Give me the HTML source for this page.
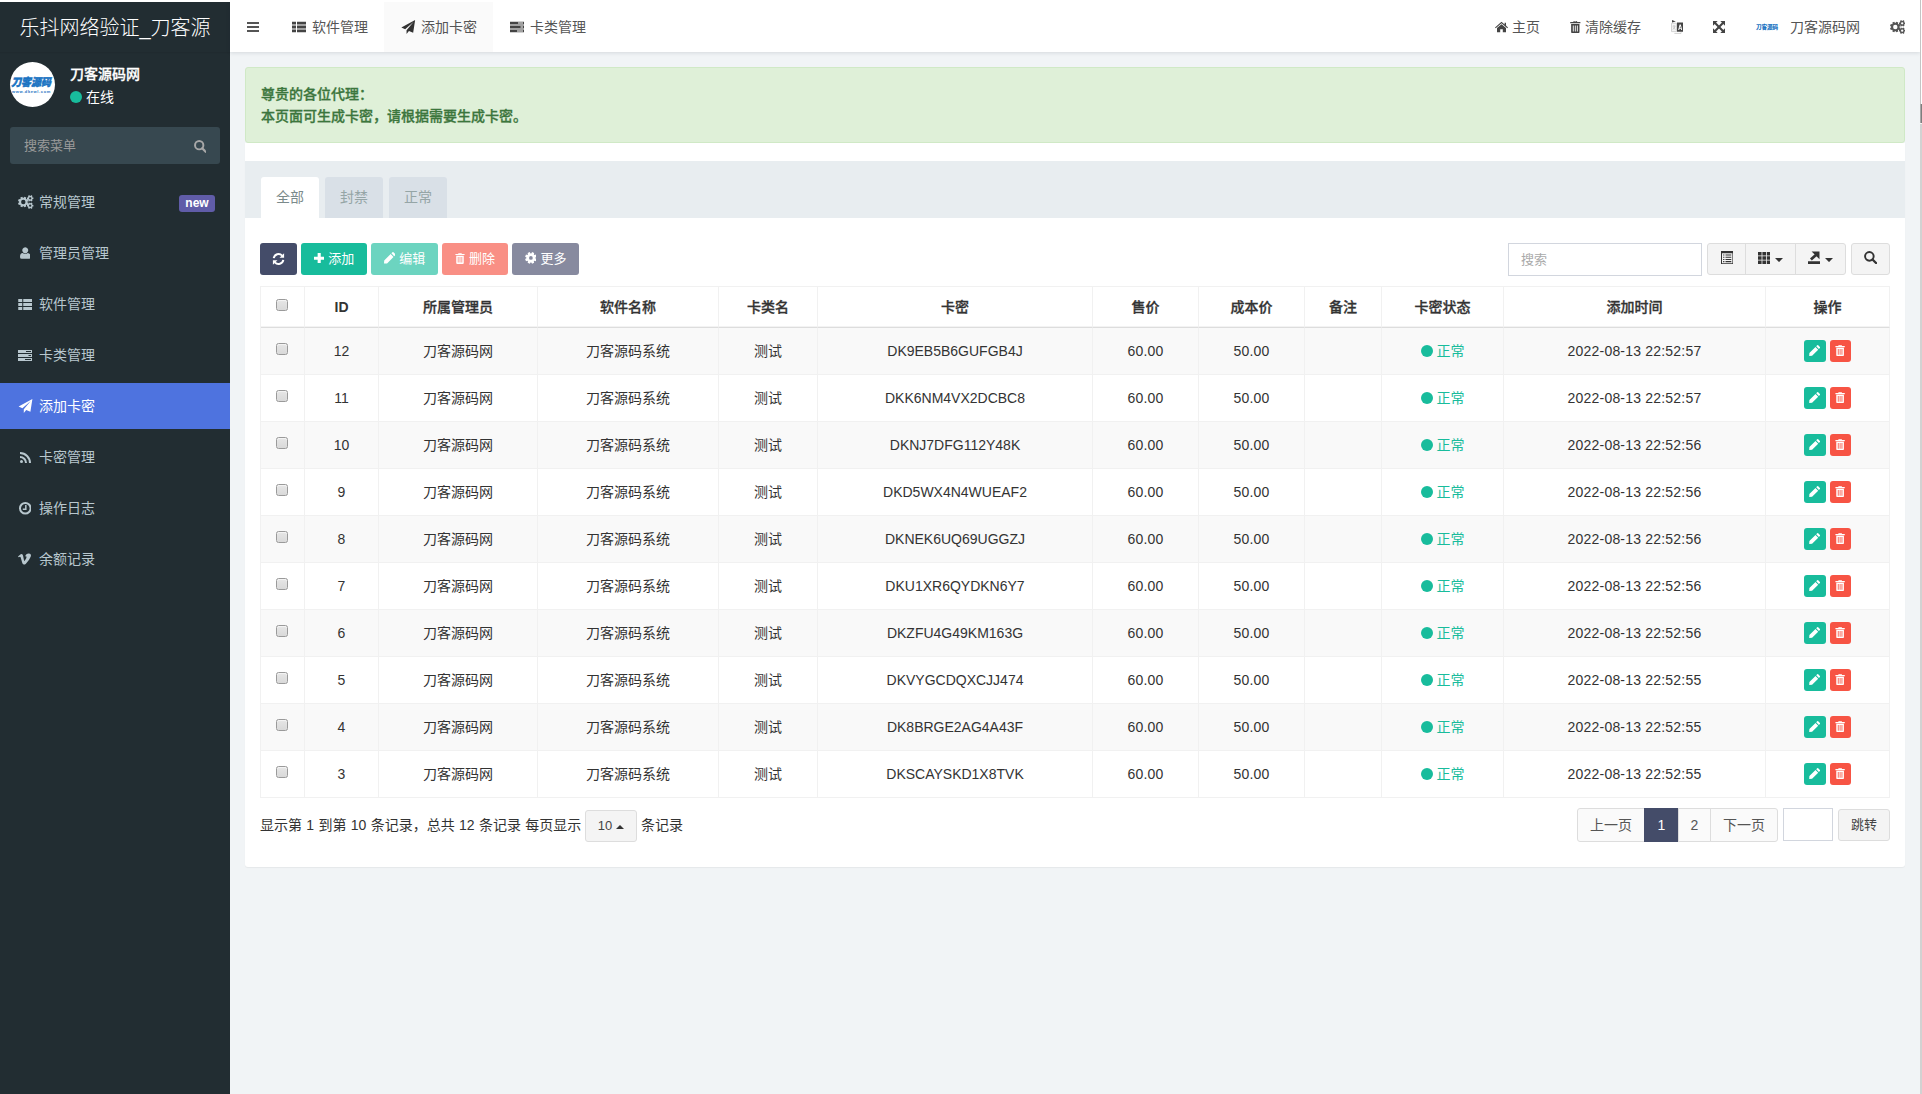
<!DOCTYPE html><html lang="zh-CN"><head><meta charset="utf-8"><title>乐抖网络验证_刀客源码网</title><style>
*{box-sizing:border-box;margin:0;padding:0}
html,body{width:1922px;height:1094px;overflow:hidden;background:#fff}
body{font-family:"Liberation Sans","Noto Sans CJK SC",sans-serif;font-size:14px;color:#444;position:relative;line-height:1.42857}
.ic{display:inline-block;vertical-align:middle}
#app{position:absolute;left:0;top:2px;width:1920px;height:1092px;background:#f1f4f6;overflow:hidden}
#edge{position:absolute;left:1920px;top:0;width:2px;height:1094px;background:#d2d2d2}
#edge i{position:absolute;left:0;width:2px;display:block}
#side{position:absolute;left:0;top:0;width:230px;height:1092px;background:#222d32}
#logo{position:absolute;left:0;top:0;width:230px;height:50px;line-height:52px;text-align:center;color:#fff;font-size:20px;font-weight:300;white-space:nowrap;overflow:hidden;box-shadow:0 1px 1px rgba(0,0,0,.05)}
#avatar{position:absolute;left:10px;top:60px;width:45px;height:45px;border-radius:50%;background:#fff;overflow:hidden;text-align:center}
#avatar b{display:block;color:#1a73c2;font-size:10px;line-height:10px;margin-top:16px;font-weight:900;-webkit-text-stroke:.45px #1a73c2;font-style:italic;letter-spacing:-.1px;white-space:nowrap;margin-left:-3px;transform:scaleY(1.08)}
#avatar s{display:block;text-decoration:none;color:#1a73c2;font-size:4px;line-height:4px;margin-top:2px;letter-spacing:.62px;font-weight:bold;white-space:nowrap;margin-left:-2px}
#uname{position:absolute;left:70px;top:62px;color:#fff;font-weight:500;-webkit-text-stroke:.3px #fff;font-size:14px;line-height:20px}
#ustat{position:absolute;left:70px;top:85px;color:#fff;font-size:14px;line-height:20px}
#ustat i{display:inline-block;width:12px;height:12px;border-radius:50%;background:#18bc9c;vertical-align:-1px;margin-right:4px}
#msearch{position:absolute;left:10px;top:125px;width:210px;height:37px;border-radius:3px;background:#374850;color:#9a9a9a;font-size:13px;line-height:37px;padding-left:14px}
#msearch .ic{position:absolute;right:14px;top:13px}
.mi{position:absolute;left:0;width:230px;height:46px;line-height:46px;color:#b8c7ce;font-size:14px}
.mi u{position:absolute;left:10px;top:0;width:30px;height:46px;text-align:center;text-decoration:none;line-height:46px}
.mi u .ic{vertical-align:middle;position:relative;top:-1px}
.mi.first u .ic{left:1px}
.mi span{position:absolute;left:39px;top:0}
.mi.act{background:#4e73df;color:#fff}
.mi em{position:absolute;left:179px;top:16px;width:36px;height:17px;border-radius:3px;background:#605ca8;color:#fff;font-style:normal;font-weight:bold;font-size:12px;line-height:16px;text-align:center}
#nav{position:absolute;left:230px;top:0;width:1690px;height:50px;background:#fff;box-shadow:0 1px 4px rgba(0,21,41,.12);color:#555;font-size:14px;line-height:50px}
#nav .t{position:absolute;top:0;height:50px;white-space:nowrap}
#nav .t .ic{position:absolute;top:50%;transform:translateY(-50%)}
#nav .t span{position:absolute;top:0}
#alert{position:absolute;left:245px;top:65px;width:1660px;height:76px;background:#dff0d8;border:1px solid #d0e9c6;border-radius:3px;color:#3c763d;font-weight:500;-webkit-text-stroke:.3px #3c763d;font-size:14px;line-height:22.5px;padding:14.5px 15px}
#panel{position:absolute;left:245px;top:141px;width:1660px;height:724px;background:#fff;border-radius:0 0 3px 3px;box-shadow:0 1px 1px rgba(0,0,0,.05)}
#phead{position:absolute;left:0;top:18px;width:1660px;height:57px;background:#e8edf0}
.tab{position:absolute;top:16px;height:41px;width:58px;border-radius:3px 3px 0 0;background:#d9e0e7;color:#95a5a6;text-align:center;line-height:40px;font-size:14px}
.tab.on{background:#fff;color:#7b8a8b}
.btn{position:absolute;top:100px;height:32px;border-radius:3px;color:#fff;font-size:13px;line-height:30px;text-align:center;white-space:nowrap;border:1px solid transparent}
.btn .ic{margin-right:4px;vertical-align:-1px}
.gbtn{position:absolute;top:100px;height:32px;background:#f4f4f4;border:1px solid #ddd;color:#444;text-align:center}
.gbtn .ic{position:absolute}
#sinput{position:absolute;left:1263px;top:100px;width:194px;height:33px;border:1px solid #d2d6de;background:#fff;color:#aaa;font-size:13px;line-height:31px;padding-left:12px}
table{position:absolute;left:15px;top:143px;width:1630px;border-collapse:separate;border-spacing:0;table-layout:fixed;font-size:14px;color:#333;border-top:1px solid #f1f1f1;border-left:1px solid #f1f1f1}
td,th{border-right:1px solid #f1f1f1;border-bottom:1px solid #f1f1f1;text-align:center;vertical-align:middle;padding:0;white-space:nowrap;overflow:hidden}
th{height:41px;font-weight:500;-webkit-text-stroke:.3px #333;border-bottom:1px solid #ddd;color:#333;box-shadow:inset 0 -1px 0 rgba(221,221,221,.35)}
td{height:47px;padding-top:1px}
td.n{letter-spacing:.2px}
th{padding-top:1px}
tr.odd td{background:#f9f9f9}
.cb{display:inline-block;width:12px;height:12px;border:1px solid #9a9a9a;border-radius:2.5px;background:linear-gradient(#e6e6e6,#d9d9d9);vertical-align:middle;position:relative;top:-2.5px;left:-.6px;box-shadow:inset 0 1px 1px rgba(255,255,255,.6)}
.ok{color:#18bc9c}
.ok i{display:inline-block;width:12px;height:12px;border-radius:50%;background:#18bc9c;vertical-align:-1px;margin-right:4px}
.ob{display:inline-block;width:22px;height:22px;border-radius:3px;vertical-align:middle;line-height:20px;text-align:center;position:relative;top:-1px}
.ob .ic{vertical-align:middle;position:relative;top:-.3px}
.ob.e{background:#18bc9c;margin-right:4px}
.ob.d{background:#f75444;width:21px;margin-right:1px}
#pinfo{position:absolute;left:15px;top:665px;height:34px;line-height:34px;color:#333;font-size:14px;white-space:nowrap;word-spacing:.45px}
#pinfo2{position:absolute;left:396px;top:665px;height:34px;line-height:34px;color:#333;font-size:14px;white-space:nowrap}
#psize{position:absolute;left:340px;top:667px;width:52px;height:32px;border:1px solid #ddd;border-radius:3px;background:#f4f4f4;text-align:center;font-size:13px;line-height:30px;color:#444}
#psize .ic{margin-left:4px;vertical-align:1px}
.pg{position:absolute;top:665px;height:34px;border:1px solid #ddd;background:#fafafa;color:#555;text-align:center;line-height:32px;font-size:14px}
.pg.on{background:#444c69;border-color:#444c69;color:#fff}
</style></head><body>
<div id="edge"><i style="top:0;height:104px;background:linear-gradient(90deg,#c4c4c4 50%,#fff 50%)"></i><i style="top:104px;height:19px;background:linear-gradient(90deg,#a8a8a8 50%,#7e7e7e 50%)"></i><i style="top:123px;height:1px;background:#f4f4f4"></i></div>
<div id="app">
<div id="side"><div id="logo">乐抖网络验证_刀客源</div>
<div id="avatar"><b>刀客源码</b><s>www.dkewl.com</s></div><div id="uname">刀客源码网</div><div id="ustat"><i></i>在线</div>
<div id="msearch">搜索菜单<svg class="ic" width="12.5" height="12.5" viewBox="0 0 12 12" ><circle cx="5" cy="5" r="4" fill="none" stroke="#a8a8a8" stroke-width="1.9"/><path d="M7.9 7.9 L11.2 11.2" stroke="#a8a8a8" stroke-width="2.2" stroke-linecap="round"/></svg></div>
<div class="mi first" style="top:177px"><u><svg class="ic" width="15.4" height="14" viewBox="0 0 15.4 14" ><path fill="#b8c7ce" fill-rule="evenodd" d="M9.48 7.41 L10.59 8.10 L9.81 9.96 L8.55 9.66 L7.96 10.25 L8.26 11.51 L6.40 12.29 L5.71 11.18 L4.89 11.18 L4.20 12.29 L2.34 11.51 L2.64 10.25 L2.05 9.66 L0.79 9.96 L0.01 8.10 L1.12 7.41 L1.12 6.59 L0.01 5.90 L0.79 4.04 L2.05 4.34 L2.64 3.75 L2.34 2.49 L4.20 1.71 L4.89 2.82 L5.71 2.82 L6.40 1.71 L8.26 2.49 L7.96 3.75 L8.55 4.34 L9.81 4.04 L10.59 5.90 L9.48 6.59Z M7.50 7.00 A2.20 2.20 0 1 0 3.10 7.00 A2.20 2.20 0 1 0 7.50 7.00 Z M14.42 2.38 L15.40 2.48 L15.40 4.12 L14.42 4.22 L14.10 4.76 L14.51 5.66 L13.09 6.48 L12.51 5.68 L11.89 5.68 L11.31 6.48 L9.89 5.66 L10.30 4.76 L9.98 4.22 L9.00 4.12 L9.00 2.48 L9.98 2.38 L10.30 1.84 L9.89 0.94 L11.31 0.12 L11.89 0.92 L12.51 0.92 L13.09 0.12 L14.51 0.94 L14.10 1.84Z M13.35 3.30 A1.15 1.15 0 1 0 11.05 3.30 A1.15 1.15 0 1 0 13.35 3.30 Z M14.42 9.78 L15.40 9.88 L15.40 11.52 L14.42 11.62 L14.10 12.16 L14.51 13.06 L13.09 13.88 L12.51 13.08 L11.89 13.08 L11.31 13.88 L9.89 13.06 L10.30 12.16 L9.98 11.62 L9.00 11.52 L9.00 9.88 L9.98 9.78 L10.30 9.24 L9.89 8.34 L11.31 7.52 L11.89 8.32 L12.51 8.32 L13.09 7.52 L14.51 8.34 L14.10 9.24Z M13.35 10.70 A1.15 1.15 0 1 0 11.05 10.70 A1.15 1.15 0 1 0 13.35 10.70 Z"/></svg></u><span>常规管理</span><em>new</em></div>
<div class="mi" style="top:228px"><u><svg class="ic" width="10.5" height="12" viewBox="0 0 10 11" ><path fill="#b8c7ce" d="M5 0 A2.8 2.9 0 1 1 4.99 0 Z M2.6 5.4 Q5 7.2 7.4 5.4 Q10 5.6 10 9.2 Q10 11 8.4 11 H1.6 Q0 11 0 9.2 Q0 5.6 2.6 5.4 Z"/></svg></u><span>管理员管理</span></div>
<div class="mi" style="top:279px"><u><svg class="ic" width="14.5" height="11" viewBox="0 0 14 11" ><path fill="#b8c7ce" d="M0 0h4v3H0zM5 0h9v3H5zM0 4h4v3H0zM5 4h9v3H5zM0 8h4v3H0zM5 8h9v3H5z"/></svg></u><span>软件管理</span></div>
<div class="mi" style="top:330px"><u><svg class="ic" width="14" height="11" viewBox="0 0 14 11" ><path fill="#b8c7ce" fill-rule="evenodd" d="M0 0h14v3.1H0zM8 1.1h5v.9H8zM0 4h14v3.1H0zM10.5 5.1h2.5v.9h-2.5zM0 8h14v3H0zM7 9.1h6v.9H7z"/></svg></u><span>卡类管理</span></div>
<div class="mi act" style="top:381px"><u><svg class="ic" width="15" height="14" viewBox="0 0 14 14" ><path fill="#fff" d="M13.9 0 L11.9 12.7 L7.7 10.9 L5.3 14 L5.3 10.2 L12.2 2 L3.9 9.2 L0.1 7.6 Z"/></svg></u><span>添加卡密</span></div>
<div class="mi" style="top:432px"><u><svg class="ic" width="11" height="11" viewBox="0 0 11 11" ><g fill="none" stroke="#b8c7ce" stroke-width="2"><path d="M0 5 A6 6 0 0 1 6 11"/><path d="M0 1 A10 10 0 0 1 10 11"/></g><circle cx="1.5" cy="9.5" r="1.5" fill="#b8c7ce"/></svg></u><span>卡密管理</span></div>
<div class="mi" style="top:483px"><u><svg class="ic" width="12.6" height="12.6" viewBox="0 0 12 12" ><circle cx="6" cy="6" r="5.05" fill="none" stroke="#b8c7ce" stroke-width="1.9"/><path d="M6.5 2.9 V6.9 H3.6" fill="none" stroke="#b8c7ce" stroke-width="1.4"/></svg></u><span>操作日志</span></div>
<div class="mi" style="top:534px"><u><svg class="ic" width="13.5" height="12" viewBox="0 0 13 11" ><path fill="#b8c7ce" d="M0 3.2 L2.6 1 Q4.4 0 4.9 2.4 L5.8 7 Q6 7.8 6.6 7 Q8.4 4.6 8.2 3.4 Q8 2.6 6.8 3.1 Q7.8 -0.1 10.6 0.1 Q13.2 0.4 12.2 3.4 Q11 6.6 7.6 10 Q5.4 12 4.2 9.6 L2.6 4 Q2.2 2.8 0.6 3.9 Z"/></svg></u><span>余额记录</span></div>
</div>
<div id="nav">
<div class="t" style="left:17px"><svg class="ic" width="12" height="10" viewBox="0 0 12 10" ><path fill="#555" d="M0 0h12v2H0zM0 4h12v2H0zM0 8h12v2H0z"/></svg></div>
<div class="t" style="left:154px;width:109px;background:#fafafa"></div>
<div class="t" style="left:62px"><svg class="ic" width="14" height="11" viewBox="0 0 14 11" ><path fill="#444" d="M0 0h4v3H0zM5 0h9v3H5zM0 4h4v3H0zM5 4h9v3H5zM0 8h4v3H0zM5 8h9v3H5z"/></svg><span style="left:20px">软件管理</span></div>
<div class="t" style="left:171px"><svg class="ic" width="14.5" height="14" viewBox="0 0 14 14" ><path fill="#333" d="M13.9 0 L11.9 12.7 L7.7 10.9 L5.3 14 L5.3 10.2 L12.2 2 L3.9 9.2 L0.1 7.6 Z"/></svg><span style="left:20px">添加卡密</span></div>
<div class="t" style="left:280px"><svg class="ic" width="14" height="11" viewBox="0 0 14 11" ><path fill="#444" fill-rule="evenodd" d="M0 0h14v3.1H0zM8 1.1h5v.9H8zM0 4h14v3.1H0zM10.5 5.1h2.5v.9h-2.5zM0 8h14v3H0zM7 9.1h6v.9H7z"/></svg><span style="left:20px">卡类管理</span></div>
<div class="t" style="left:1265px"><svg class="ic" width="13" height="11" viewBox="0 0 13 11" ><path fill="#444" d="M6.5 0.2 L9.6 2.9 V1.2 H11 V4.1 L13 5.9 L12.3 6.7 L6.5 1.8 L0.7 6.7 L0 5.9 Z M6.5 2.8 L11 6.6 V11 H7.8 V7.8 H5.2 V11 H2 V6.6 Z"/></svg><span style="left:17px">主页</span></div>
<div class="t" style="left:1340px"><svg class="ic" width="10.6" height="12.2" viewBox="0 0 10 12" ><path fill="#444" fill-rule="evenodd" d="M3 1 L3.6 0 H6.4 L7 1 H10 V2.3 H0 V1 Z M3.9 1 H6.1 L5.9 0.7 H4.1 Z M0.9 3 H9.1 V10.8 Q9.1 12 7.9 12 H2.1 Q0.9 12 0.9 10.8 Z M2.55 4.4 V10.4 H3.45 V4.4 Z M4.55 4.4 V10.4 H5.45 V4.4 Z M6.55 4.4 V10.4 H7.45 V4.4 Z"/></svg><span style="left:15px">清除缓存</span></div>
<div class="t" style="left:1441px"><svg class="ic" width="12" height="14" viewBox="0 0 12 14" ><path d="M0.5 3.2H5.6V11.6H0.5Z" fill="#f4f4f4" stroke="#c9c9c9" stroke-width=".8"/><path d="M1.6 6.2H4.4M3 5.2V6.2M1.7 9.4Q3.6 8.4 4 6.4M2.2 7.4L4.3 9.6" stroke="#bbb" stroke-width=".7" fill="none"/><path fill="#444" d="M1 0L4.8 1.4L1 2.6Z"/><path fill="#444" fill-rule="evenodd" d="M6 2.6H12V11.8H6Z M8.6 4.6L7.2 10H8.2L8.5 8.8H9.9L10.2 10H11.2L9.8 4.6Z M9.2 5.9L9.7 7.9H8.7Z"/><path d="M3.4 13.4H10L10.2 12.4" stroke="#c4c4c4" stroke-width=".8" fill="none"/></svg></div>
<div class="t" style="left:1483px"><svg class="ic" width="12" height="12" viewBox="0 0 12 12" ><path fill="#444" d="M0 0H4.7L0 4.7ZM12 0V4.7L7.3 0ZM12 12H7.3L12 7.3ZM0 12V7.3L4.7 12Z"/><path d="M1.6 1.6L10.4 10.4M10.4 1.6L1.6 10.4" stroke="#444" stroke-width="2.1"/></svg></div>
<div class="t" style="left:1525px"><i style="position:absolute;left:0;top:13px;width:25px;height:25px;border-radius:50%;background:#fff;overflow:hidden;text-align:center;font-style:normal;font-size:5.6px;line-height:24px;color:#1a73c2;font-weight:900;white-space:nowrap;letter-spacing:-.1px;text-indent:-1px">刀客源码</i><span style="left:35px">刀客源码网</span></div>
<div class="t" style="left:1660px"><svg class="ic" width="15.4" height="14" viewBox="0 0 15.4 14" ><path fill="#555" fill-rule="evenodd" d="M9.48 7.41 L10.59 8.10 L9.81 9.96 L8.55 9.66 L7.96 10.25 L8.26 11.51 L6.40 12.29 L5.71 11.18 L4.89 11.18 L4.20 12.29 L2.34 11.51 L2.64 10.25 L2.05 9.66 L0.79 9.96 L0.01 8.10 L1.12 7.41 L1.12 6.59 L0.01 5.90 L0.79 4.04 L2.05 4.34 L2.64 3.75 L2.34 2.49 L4.20 1.71 L4.89 2.82 L5.71 2.82 L6.40 1.71 L8.26 2.49 L7.96 3.75 L8.55 4.34 L9.81 4.04 L10.59 5.90 L9.48 6.59Z M7.50 7.00 A2.20 2.20 0 1 0 3.10 7.00 A2.20 2.20 0 1 0 7.50 7.00 Z M14.42 2.38 L15.40 2.48 L15.40 4.12 L14.42 4.22 L14.10 4.76 L14.51 5.66 L13.09 6.48 L12.51 5.68 L11.89 5.68 L11.31 6.48 L9.89 5.66 L10.30 4.76 L9.98 4.22 L9.00 4.12 L9.00 2.48 L9.98 2.38 L10.30 1.84 L9.89 0.94 L11.31 0.12 L11.89 0.92 L12.51 0.92 L13.09 0.12 L14.51 0.94 L14.10 1.84Z M13.35 3.30 A1.15 1.15 0 1 0 11.05 3.30 A1.15 1.15 0 1 0 13.35 3.30 Z M14.42 9.78 L15.40 9.88 L15.40 11.52 L14.42 11.62 L14.10 12.16 L14.51 13.06 L13.09 13.88 L12.51 13.08 L11.89 13.08 L11.31 13.88 L9.89 13.06 L10.30 12.16 L9.98 11.62 L9.00 11.52 L9.00 9.88 L9.98 9.78 L10.30 9.24 L9.89 8.34 L11.31 7.52 L11.89 8.32 L12.51 8.32 L13.09 7.52 L14.51 8.34 L14.10 9.24Z M13.35 10.70 A1.15 1.15 0 1 0 11.05 10.70 A1.15 1.15 0 1 0 13.35 10.70 Z"/></svg></div>
</div>
<div id="alert">尊贵的各位代理：<br>本页面可生成卡密，请根据需要生成卡密。</div>
<div id="panel"><div id="phead">
<div class="tab on" style="left:16px">全部</div>
<div class="tab" style="left:80px">封禁</div>
<div class="tab" style="left:144px">正常</div>
</div>
<div class="btn" style="left:15px;width:37px;background:#444c69"><svg class="ic" style="margin:0;vertical-align:-2px" width="13" height="12" viewBox="0 0 12 12" ><g fill="none" stroke="#fff" stroke-width="2"><path d="M1.2 5.2 A4.9 4.9 0 0 1 9.6 2.6"/><path d="M10.8 6.8 A4.9 4.9 0 0 1 2.4 9.4"/></g><path fill="#fff" d="M11.6 0.2 V4.8 H7 Z M0.4 11.8 V7.2 H5 Z"/></svg></div>
<div class="btn" style="left:56px;width:66px;background:#18bc9c"><svg class="ic" style="vertical-align:0" width="10.4" height="10.4" viewBox="0 0 10 10" ><path fill="#fff" d="M3.5 0 H6.5 V3.5 H10 V6.5 H6.5 V10 H3.5 V6.5 H0 V3.5 H3.5 Z"/></svg>添加</div>
<div class="btn" style="left:126px;width:67px;background:#6cd4c0"><svg class="ic" width="11.6" height="11.6" viewBox="0 0 11 11" ><path fill="#fff" d="M8 0.3 Q8.5 -0.2 9 0.3 L10.7 2 Q11.2 2.5 10.7 3 L9.7 4 L7 1.3 Z M6.3 2 L9 4.7 L2.9 10.8 L0 11 L0.2 8.1 Z"/></svg>编辑</div>
<div class="btn" style="left:197px;width:66px;background:#f98f85"><svg class="ic" width="10" height="11" viewBox="0 0 10 12" ><path fill="#fff" fill-rule="evenodd" d="M3 1 L3.6 0 H6.4 L7 1 H10 V2.3 H0 V1 Z M3.9 1 H6.1 L5.9 0.7 H4.1 Z M0.9 3 H9.1 V10.8 Q9.1 12 7.9 12 H2.1 Q0.9 12 0.9 10.8 Z M2.55 4.4 V10.4 H3.45 V4.4 Z M4.55 4.4 V10.4 H5.45 V4.4 Z M6.55 4.4 V10.4 H7.45 V4.4 Z"/></svg>删除</div>
<div class="btn" style="left:267px;width:67px;background:#878a9f"><svg class="ic" width="11.8" height="11.8" viewBox="0 0 12 12" ><path fill="#fff" fill-rule="evenodd" d="M10.58 6.41 L11.88 7.18 L10.99 9.33 L9.53 8.95 L8.95 9.53 L9.33 10.99 L7.18 11.88 L6.41 10.58 L5.59 10.58 L4.82 11.88 L2.67 10.99 L3.05 9.53 L2.47 8.95 L1.01 9.33 L0.12 7.18 L1.42 6.41 L1.42 5.59 L0.12 4.82 L1.01 2.67 L2.47 3.05 L3.05 2.47 L2.67 1.01 L4.82 0.12 L5.59 1.42 L6.41 1.42 L7.18 0.12 L9.33 1.01 L8.95 2.47 L9.53 3.05 L10.99 2.67 L11.88 4.82 L10.58 5.59Z M7.90 6.00 A1.90 1.90 0 1 0 4.10 6.00 A1.90 1.90 0 1 0 7.90 6.00 Z"/></svg>更多</div>
<div id="sinput">搜索</div>
<div class="gbtn" style="left:1462px;width:39px;border-radius:3px 0 0 3px"><svg class="ic" style="left:12.8px;top:6.9px" width="12.4" height="13.2" viewBox="0 0 12.4 13.2" ><path fill="#333" fill-rule="evenodd" d="M0 0H12.4V13.2H0Z M1 2.2V12.2H11.4V2.2Z M2.1 3.5H3.4V4.6H2.1Z M4.5 3.5H10.3V4.6H4.5Z M2.1 5.7H3.4V6.8H2.1Z M4.5 5.7H10.3V6.8H4.5Z M2.1 7.9H3.4V9H2.1Z M4.5 7.9H10.3V9H4.5Z M2.1 10.1H3.4V11.2H2.1Z M4.5 10.1H10.3V11.2H4.5Z"/><path fill="#fff" d="M1 2.2H11.4V12.2H1Z" opacity="0"/></svg></div>
<div class="gbtn" style="left:1500px;width:51px"><svg class="ic" style="left:12px;top:7.9px" width="12.4" height="12.2" viewBox="0 0 12.4 12.2" ><path fill="#333" d="M0.00 0.00h3.60v3.50h-3.60zM4.40 0.00h3.60v3.50h-3.60zM8.80 0.00h3.60v3.50h-3.60zM0.00 4.30h3.60v3.50h-3.60zM4.40 4.30h3.60v3.50h-3.60zM8.80 4.30h3.60v3.50h-3.60zM0.00 8.60h3.60v3.50h-3.60zM4.40 8.60h3.60v3.50h-3.60zM8.80 8.60h3.60v3.50h-3.60z"/></svg><svg class="ic" style="left:29.3px;top:13.8px" width="8" height="4.2" viewBox="0 0 8 4" ><path fill="#333" d="M0 0H8L4 4Z"/></svg></div>
<div class="gbtn" style="left:1550px;width:51px;border-radius:0 3px 3px 0"><svg class="ic" style="left:12px;top:6.9px" width="12.4" height="13.2" viewBox="0 0 12.4 13.2" ><path fill="#333" d="M0 10.2H12.4V13.2H0Z M3.6 0.4H11.5V8.3Z"/><path d="M8 3.9L2.9 8.6" stroke="#333" stroke-width="2.7"/></svg><svg class="ic" style="left:29.3px;top:13.8px" width="8" height="4.2" viewBox="0 0 8 4" ><path fill="#333" d="M0 0H8L4 4Z"/></svg></div>
<div class="gbtn" style="left:1606px;width:39px;border-radius:3px"><svg class="ic" style="left:12.4px;top:7.4px" width="12.9" height="12.9" viewBox="0 0 12 12" ><circle cx="5" cy="5" r="4" fill="none" stroke="#333" stroke-width="1.8"/><path d="M7.9 7.9 L11.2 11.2" stroke="#333" stroke-width="2.2" stroke-linecap="round"/></svg></div>
<table><colgroup><col style="width:44px"><col style="width:74px"><col style="width:159px"><col style="width:181px"><col style="width:99px"><col style="width:275px"><col style="width:106px"><col style="width:106px"><col style="width:77px"><col style="width:122px"><col style="width:262px"><col style="width:124px"></colgroup>
<thead><tr><th><i class="cb"></i></th><th style="font-weight:bold;-webkit-text-stroke:0">ID</th><th>所属管理员</th><th>软件名称</th><th>卡类名</th><th>卡密</th><th>售价</th><th>成本价</th><th>备注</th><th>卡密状态</th><th>添加时间</th><th>操作</th></tr></thead><tbody>
<tr class="odd"><td><i class="cb"></i></td><td>12</td><td>刀客源码网</td><td>刀客源码系统</td><td>测试</td><td>DK9EB5B6GUFGB4J</td><td class="n">60.00</td><td class="n">50.00</td><td></td><td><span class="ok"><i></i>正常</span></td><td class="n">2022-08-13 22:52:57</td><td><span class="ob e"><svg class="ic" width="11.4" height="11" viewBox="0 0 11 11" ><path fill="#fff" d="M8 0.3 Q8.5 -0.2 9 0.3 L10.7 2 Q11.2 2.5 10.7 3 L9.7 4 L7 1.3 Z M6.3 2 L9 4.7 L2.9 10.8 L0 11 L0.2 8.1 Z"/></svg></span><span class="ob d"><svg class="ic" width="10.2" height="11.2" viewBox="0 0 10 12" ><path fill="#fff" fill-rule="evenodd" d="M3 1 L3.6 0 H6.4 L7 1 H10 V2.3 H0 V1 Z M3.9 1 H6.1 L5.9 0.7 H4.1 Z M0.9 3 H9.1 V10.8 Q9.1 12 7.9 12 H2.1 Q0.9 12 0.9 10.8 Z M2.55 4.4 V10.4 H3.45 V4.4 Z M4.55 4.4 V10.4 H5.45 V4.4 Z M6.55 4.4 V10.4 H7.45 V4.4 Z"/></svg></span></td></tr>
<tr class="even"><td><i class="cb"></i></td><td>11</td><td>刀客源码网</td><td>刀客源码系统</td><td>测试</td><td>DKK6NM4VX2DCBC8</td><td class="n">60.00</td><td class="n">50.00</td><td></td><td><span class="ok"><i></i>正常</span></td><td class="n">2022-08-13 22:52:57</td><td><span class="ob e"><svg class="ic" width="11.4" height="11" viewBox="0 0 11 11" ><path fill="#fff" d="M8 0.3 Q8.5 -0.2 9 0.3 L10.7 2 Q11.2 2.5 10.7 3 L9.7 4 L7 1.3 Z M6.3 2 L9 4.7 L2.9 10.8 L0 11 L0.2 8.1 Z"/></svg></span><span class="ob d"><svg class="ic" width="10.2" height="11.2" viewBox="0 0 10 12" ><path fill="#fff" fill-rule="evenodd" d="M3 1 L3.6 0 H6.4 L7 1 H10 V2.3 H0 V1 Z M3.9 1 H6.1 L5.9 0.7 H4.1 Z M0.9 3 H9.1 V10.8 Q9.1 12 7.9 12 H2.1 Q0.9 12 0.9 10.8 Z M2.55 4.4 V10.4 H3.45 V4.4 Z M4.55 4.4 V10.4 H5.45 V4.4 Z M6.55 4.4 V10.4 H7.45 V4.4 Z"/></svg></span></td></tr>
<tr class="odd"><td><i class="cb"></i></td><td>10</td><td>刀客源码网</td><td>刀客源码系统</td><td>测试</td><td>DKNJ7DFG112Y48K</td><td class="n">60.00</td><td class="n">50.00</td><td></td><td><span class="ok"><i></i>正常</span></td><td class="n">2022-08-13 22:52:56</td><td><span class="ob e"><svg class="ic" width="11.4" height="11" viewBox="0 0 11 11" ><path fill="#fff" d="M8 0.3 Q8.5 -0.2 9 0.3 L10.7 2 Q11.2 2.5 10.7 3 L9.7 4 L7 1.3 Z M6.3 2 L9 4.7 L2.9 10.8 L0 11 L0.2 8.1 Z"/></svg></span><span class="ob d"><svg class="ic" width="10.2" height="11.2" viewBox="0 0 10 12" ><path fill="#fff" fill-rule="evenodd" d="M3 1 L3.6 0 H6.4 L7 1 H10 V2.3 H0 V1 Z M3.9 1 H6.1 L5.9 0.7 H4.1 Z M0.9 3 H9.1 V10.8 Q9.1 12 7.9 12 H2.1 Q0.9 12 0.9 10.8 Z M2.55 4.4 V10.4 H3.45 V4.4 Z M4.55 4.4 V10.4 H5.45 V4.4 Z M6.55 4.4 V10.4 H7.45 V4.4 Z"/></svg></span></td></tr>
<tr class="even"><td><i class="cb"></i></td><td>9</td><td>刀客源码网</td><td>刀客源码系统</td><td>测试</td><td>DKD5WX4N4WUEAF2</td><td class="n">60.00</td><td class="n">50.00</td><td></td><td><span class="ok"><i></i>正常</span></td><td class="n">2022-08-13 22:52:56</td><td><span class="ob e"><svg class="ic" width="11.4" height="11" viewBox="0 0 11 11" ><path fill="#fff" d="M8 0.3 Q8.5 -0.2 9 0.3 L10.7 2 Q11.2 2.5 10.7 3 L9.7 4 L7 1.3 Z M6.3 2 L9 4.7 L2.9 10.8 L0 11 L0.2 8.1 Z"/></svg></span><span class="ob d"><svg class="ic" width="10.2" height="11.2" viewBox="0 0 10 12" ><path fill="#fff" fill-rule="evenodd" d="M3 1 L3.6 0 H6.4 L7 1 H10 V2.3 H0 V1 Z M3.9 1 H6.1 L5.9 0.7 H4.1 Z M0.9 3 H9.1 V10.8 Q9.1 12 7.9 12 H2.1 Q0.9 12 0.9 10.8 Z M2.55 4.4 V10.4 H3.45 V4.4 Z M4.55 4.4 V10.4 H5.45 V4.4 Z M6.55 4.4 V10.4 H7.45 V4.4 Z"/></svg></span></td></tr>
<tr class="odd"><td><i class="cb"></i></td><td>8</td><td>刀客源码网</td><td>刀客源码系统</td><td>测试</td><td>DKNEK6UQ69UGGZJ</td><td class="n">60.00</td><td class="n">50.00</td><td></td><td><span class="ok"><i></i>正常</span></td><td class="n">2022-08-13 22:52:56</td><td><span class="ob e"><svg class="ic" width="11.4" height="11" viewBox="0 0 11 11" ><path fill="#fff" d="M8 0.3 Q8.5 -0.2 9 0.3 L10.7 2 Q11.2 2.5 10.7 3 L9.7 4 L7 1.3 Z M6.3 2 L9 4.7 L2.9 10.8 L0 11 L0.2 8.1 Z"/></svg></span><span class="ob d"><svg class="ic" width="10.2" height="11.2" viewBox="0 0 10 12" ><path fill="#fff" fill-rule="evenodd" d="M3 1 L3.6 0 H6.4 L7 1 H10 V2.3 H0 V1 Z M3.9 1 H6.1 L5.9 0.7 H4.1 Z M0.9 3 H9.1 V10.8 Q9.1 12 7.9 12 H2.1 Q0.9 12 0.9 10.8 Z M2.55 4.4 V10.4 H3.45 V4.4 Z M4.55 4.4 V10.4 H5.45 V4.4 Z M6.55 4.4 V10.4 H7.45 V4.4 Z"/></svg></span></td></tr>
<tr class="even"><td><i class="cb"></i></td><td>7</td><td>刀客源码网</td><td>刀客源码系统</td><td>测试</td><td>DKU1XR6QYDKN6Y7</td><td class="n">60.00</td><td class="n">50.00</td><td></td><td><span class="ok"><i></i>正常</span></td><td class="n">2022-08-13 22:52:56</td><td><span class="ob e"><svg class="ic" width="11.4" height="11" viewBox="0 0 11 11" ><path fill="#fff" d="M8 0.3 Q8.5 -0.2 9 0.3 L10.7 2 Q11.2 2.5 10.7 3 L9.7 4 L7 1.3 Z M6.3 2 L9 4.7 L2.9 10.8 L0 11 L0.2 8.1 Z"/></svg></span><span class="ob d"><svg class="ic" width="10.2" height="11.2" viewBox="0 0 10 12" ><path fill="#fff" fill-rule="evenodd" d="M3 1 L3.6 0 H6.4 L7 1 H10 V2.3 H0 V1 Z M3.9 1 H6.1 L5.9 0.7 H4.1 Z M0.9 3 H9.1 V10.8 Q9.1 12 7.9 12 H2.1 Q0.9 12 0.9 10.8 Z M2.55 4.4 V10.4 H3.45 V4.4 Z M4.55 4.4 V10.4 H5.45 V4.4 Z M6.55 4.4 V10.4 H7.45 V4.4 Z"/></svg></span></td></tr>
<tr class="odd"><td><i class="cb"></i></td><td>6</td><td>刀客源码网</td><td>刀客源码系统</td><td>测试</td><td>DKZFU4G49KM163G</td><td class="n">60.00</td><td class="n">50.00</td><td></td><td><span class="ok"><i></i>正常</span></td><td class="n">2022-08-13 22:52:56</td><td><span class="ob e"><svg class="ic" width="11.4" height="11" viewBox="0 0 11 11" ><path fill="#fff" d="M8 0.3 Q8.5 -0.2 9 0.3 L10.7 2 Q11.2 2.5 10.7 3 L9.7 4 L7 1.3 Z M6.3 2 L9 4.7 L2.9 10.8 L0 11 L0.2 8.1 Z"/></svg></span><span class="ob d"><svg class="ic" width="10.2" height="11.2" viewBox="0 0 10 12" ><path fill="#fff" fill-rule="evenodd" d="M3 1 L3.6 0 H6.4 L7 1 H10 V2.3 H0 V1 Z M3.9 1 H6.1 L5.9 0.7 H4.1 Z M0.9 3 H9.1 V10.8 Q9.1 12 7.9 12 H2.1 Q0.9 12 0.9 10.8 Z M2.55 4.4 V10.4 H3.45 V4.4 Z M4.55 4.4 V10.4 H5.45 V4.4 Z M6.55 4.4 V10.4 H7.45 V4.4 Z"/></svg></span></td></tr>
<tr class="even"><td><i class="cb"></i></td><td>5</td><td>刀客源码网</td><td>刀客源码系统</td><td>测试</td><td>DKVYGCDQXCJJ474</td><td class="n">60.00</td><td class="n">50.00</td><td></td><td><span class="ok"><i></i>正常</span></td><td class="n">2022-08-13 22:52:55</td><td><span class="ob e"><svg class="ic" width="11.4" height="11" viewBox="0 0 11 11" ><path fill="#fff" d="M8 0.3 Q8.5 -0.2 9 0.3 L10.7 2 Q11.2 2.5 10.7 3 L9.7 4 L7 1.3 Z M6.3 2 L9 4.7 L2.9 10.8 L0 11 L0.2 8.1 Z"/></svg></span><span class="ob d"><svg class="ic" width="10.2" height="11.2" viewBox="0 0 10 12" ><path fill="#fff" fill-rule="evenodd" d="M3 1 L3.6 0 H6.4 L7 1 H10 V2.3 H0 V1 Z M3.9 1 H6.1 L5.9 0.7 H4.1 Z M0.9 3 H9.1 V10.8 Q9.1 12 7.9 12 H2.1 Q0.9 12 0.9 10.8 Z M2.55 4.4 V10.4 H3.45 V4.4 Z M4.55 4.4 V10.4 H5.45 V4.4 Z M6.55 4.4 V10.4 H7.45 V4.4 Z"/></svg></span></td></tr>
<tr class="odd"><td><i class="cb"></i></td><td>4</td><td>刀客源码网</td><td>刀客源码系统</td><td>测试</td><td>DK8BRGE2AG4A43F</td><td class="n">60.00</td><td class="n">50.00</td><td></td><td><span class="ok"><i></i>正常</span></td><td class="n">2022-08-13 22:52:55</td><td><span class="ob e"><svg class="ic" width="11.4" height="11" viewBox="0 0 11 11" ><path fill="#fff" d="M8 0.3 Q8.5 -0.2 9 0.3 L10.7 2 Q11.2 2.5 10.7 3 L9.7 4 L7 1.3 Z M6.3 2 L9 4.7 L2.9 10.8 L0 11 L0.2 8.1 Z"/></svg></span><span class="ob d"><svg class="ic" width="10.2" height="11.2" viewBox="0 0 10 12" ><path fill="#fff" fill-rule="evenodd" d="M3 1 L3.6 0 H6.4 L7 1 H10 V2.3 H0 V1 Z M3.9 1 H6.1 L5.9 0.7 H4.1 Z M0.9 3 H9.1 V10.8 Q9.1 12 7.9 12 H2.1 Q0.9 12 0.9 10.8 Z M2.55 4.4 V10.4 H3.45 V4.4 Z M4.55 4.4 V10.4 H5.45 V4.4 Z M6.55 4.4 V10.4 H7.45 V4.4 Z"/></svg></span></td></tr>
<tr class="even"><td><i class="cb"></i></td><td>3</td><td>刀客源码网</td><td>刀客源码系统</td><td>测试</td><td>DKSCAYSKD1X8TVK</td><td class="n">60.00</td><td class="n">50.00</td><td></td><td><span class="ok"><i></i>正常</span></td><td class="n">2022-08-13 22:52:55</td><td><span class="ob e"><svg class="ic" width="11.4" height="11" viewBox="0 0 11 11" ><path fill="#fff" d="M8 0.3 Q8.5 -0.2 9 0.3 L10.7 2 Q11.2 2.5 10.7 3 L9.7 4 L7 1.3 Z M6.3 2 L9 4.7 L2.9 10.8 L0 11 L0.2 8.1 Z"/></svg></span><span class="ob d"><svg class="ic" width="10.2" height="11.2" viewBox="0 0 10 12" ><path fill="#fff" fill-rule="evenodd" d="M3 1 L3.6 0 H6.4 L7 1 H10 V2.3 H0 V1 Z M3.9 1 H6.1 L5.9 0.7 H4.1 Z M0.9 3 H9.1 V10.8 Q9.1 12 7.9 12 H2.1 Q0.9 12 0.9 10.8 Z M2.55 4.4 V10.4 H3.45 V4.4 Z M4.55 4.4 V10.4 H5.45 V4.4 Z M6.55 4.4 V10.4 H7.45 V4.4 Z"/></svg></span></td></tr>
</tbody></table>
<div id="pinfo">显示第 1 到第 10 条记录，总共 12 条记录 每页显示</div>
<div id="psize">10<svg class="ic" width="8" height="4" viewBox="0 0 8 4" ><path fill="#333" d="M0 4H8L4 0Z"/></svg></div>
<div id="pinfo2">条记录</div>
<div class="pg" style="left:1332px;width:68px;border-radius:3px 0 0 3px">上一页</div>
<div class="pg on" style="left:1399px;width:35px">1</div>
<div class="pg" style="left:1433px;width:33px">2</div>
<div class="pg" style="left:1465px;width:68px;border-radius:0 3px 3px 0">下一页</div>
<div style="position:absolute;left:1538px;top:665px;width:50px;height:33px;border:1px solid #d2d6de;background:#fff"></div>
<div style="position:absolute;left:1593px;top:666px;width:52px;height:32px;border:1px solid #ddd;border-radius:3px;background:#f4f4f4;color:#444;font-size:13px;line-height:30px;text-align:center">跳转</div>
</div>
</div></body></html>
